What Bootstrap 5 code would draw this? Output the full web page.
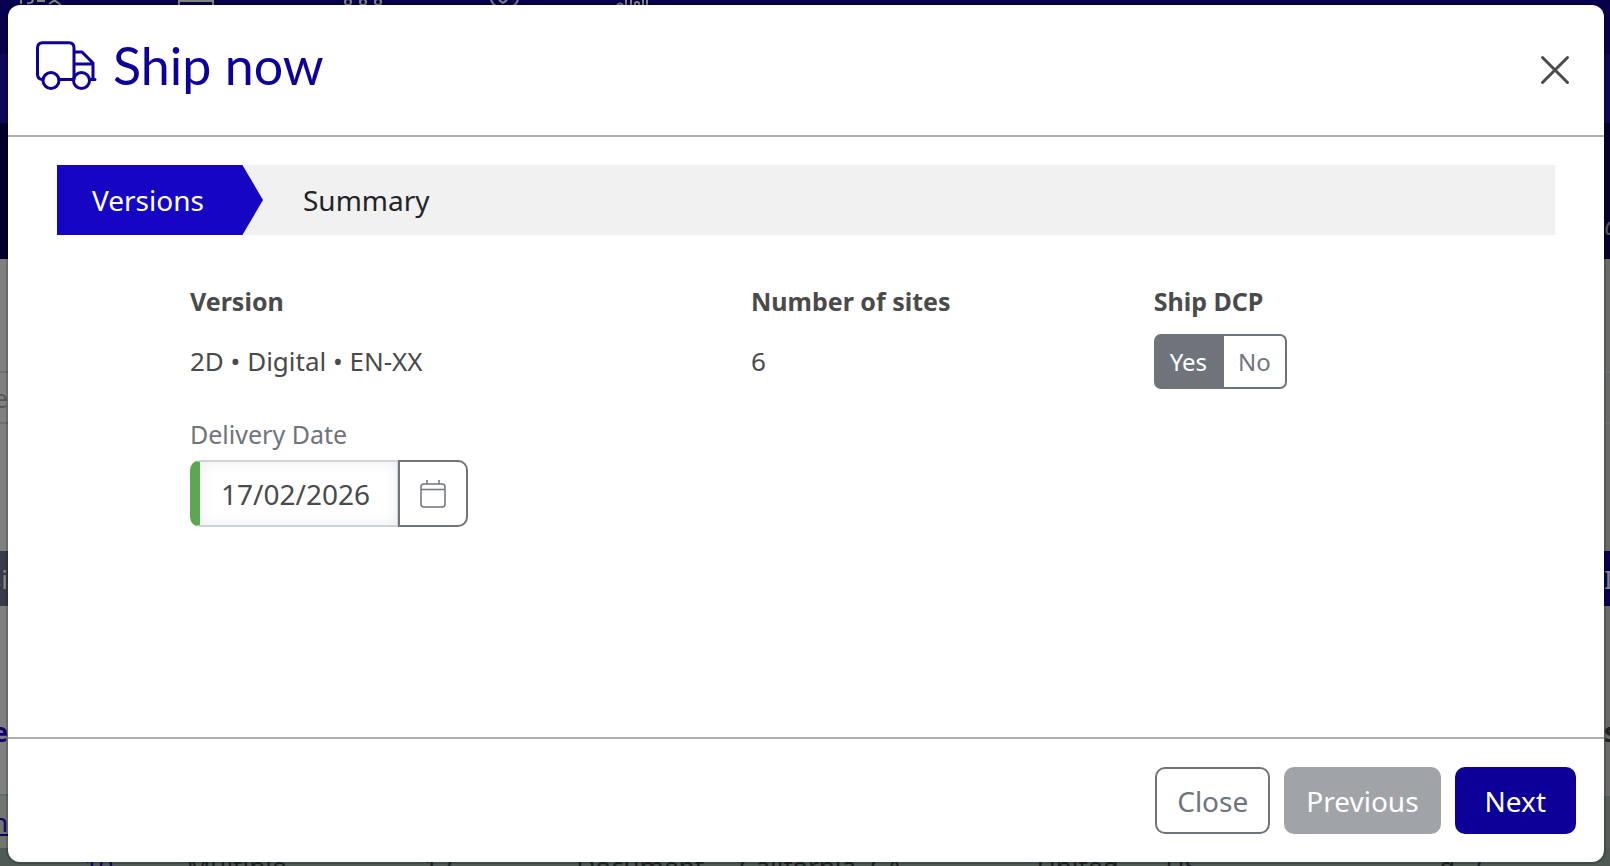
<!DOCTYPE html>
<html lang="en">
<head>
<meta charset="utf-8">
<meta name="viewport" content="width=device-width, initial-scale=1">
<title>Ship now</title>
<link href="https://cdn.jsdelivr.net/npm/bootstrap@5.3.0/dist/css/bootstrap.min.css" rel="stylesheet">
<style>
  :root { --navy: #0c0099; --slate: #6f747b; --ink: #4a4a4a; }
  body { font-family: "Noto Sans", "Open Sans", sans-serif; font-size: 26px; line-height: 36px; color: var(--ink); background: #808080; }

  /* dimmed page behind the dialog */
  .page-behind { position: absolute; inset: 0; overflow: hidden; z-index: 0; background: linear-gradient(90deg, #808080 50%, #666b68 50%); }
  .page-behind .line-box { display: flex; justify-content: space-between; align-items: center; white-space: nowrap; }
  .band-icons { height: 54px; background: #07004d; color: #85857c; }
  .band-icons svg { display: block; }
  .band-tabs { height: 69px; background: #0e085a; }
  .band-hero { height: 136px; background: #03002c; color: #55554f; }
  .band-blank { height: 112px; }
  .band-search { height: 53px; border: solid #6c7072; border-width: 2px 0; color: #55595a; }
  .band-gap { height: 127px; }
  .band-bar { height: 55px; background: linear-gradient(90deg, #393b48 50%, #07004d 50%); color: #858585; }
  .band-head { height: 190px; padding-top: 108px; border-bottom: 2px solid #6a6a72; font-weight: 700; color: #222; }
  .band-rows { background: linear-gradient(90deg, #6f7770 50%, #555f57 50%); color: #262a2c; }
  .band-rows a, .band-head span:first-child { color: #120070; }
  .row-cells { display: grid; grid-template-columns: 5.2% 6.4% 14.7% 9.5% 10.1% 18.5% 8% 17% 1fr; background: #505a55; color: #1d2123; white-space: nowrap; }
  .row-cells a { color: #120070; }
  .clip-left { direction: rtl; width: 8px; overflow: hidden; }
  .clip-right { width: 6px; overflow: hidden; }

  .dialog-frame { position: relative; z-index: 1; min-height: 100vh; padding: 5px 6px 4px 8px; }
  .dialog-frame .modal-content { flex: 1 1 auto; border: 0; border-radius: 12px; color: var(--ink); background: #fff; box-shadow: 0 0 0 2px #0000002e; }
  .modal-header { border-bottom: 2px solid #adadad; height: 132px; padding: 0 34px 0 27px; align-items: flex-start; }
  .modal-title { margin-top: 28px; font-family: Lato, sans-serif; font-size: 52px; font-weight: 400; line-height: 64px; color: var(--navy); }
  .x-button { margin-top: 50px; padding: 0; border: 0; background: none; line-height: 0; }
  .modal-body { padding: 28px 49px; }

  .steps { height: 70px; background: #f1f1f1; font-size: 28px; }
  .steps a { display: flex; align-items: center; color: #212529; text-decoration: none; }
  .steps .active { width: 206px; padding-left: 35px; color: #fff; background: #1406c3; clip-path: polygon(0 0, 90% 0, 100% 50%, 90% 100%, 0 100%); }
  .steps .next-step { padding-left: 40px; }

  .fields { display: grid; grid-template-columns: 41.1% 29.5% 1fr; margin: 48px 0 0 133px; }
  .fields h2 { margin: 0 0 15px; font-size: 25px; line-height: 36px; font-weight: 700; }
  .fields p { margin: 0; line-height: 54px; }
  .date-label { display: block; margin-top: 28px; font-size: 25px; line-height: 36px; color: var(--slate); }

  .toggle .btn { display: flex; align-items: center; height: 55px; padding: 0 14px; border: 2px solid var(--slate); border-radius: 7px; font-size: 24px; color: var(--slate); }
  .toggle .btn-check:checked + .btn { color: #fff; background: var(--slate); border-color: var(--slate); }

  .date-group { width: 278px; height: 67px; margin-top: 8px; }
  .date-group .form-control { border: 2px solid #ced2d9; border-left: 10px solid #5fa653; border-radius: 10px; padding: 0 0 0 21px; font-size: 28px; color: var(--ink); box-shadow: inset 0 0 14px #00000014; }
  .date-group .btn { width: 70px; padding: 0; border: 2px solid var(--slate); border-radius: 10px; color: var(--slate); line-height: 0; }

  .modal-footer { border-top: 2px solid #adadad; padding: 28px; gap: 14px; }
  .modal-footer > * { margin: 0; }
  .modal-footer .btn { height: 67px; padding: 0 20px; border: 2px solid; border-radius: 10px; font-size: 28px; }
  .btn-shut { color: var(--slate); border-color: var(--slate) !important; background: #fff; }
  .modal-footer .btn-prev { color: #fff; background: #a0a3a8; border-color: #a0a3a8; opacity: 1; }
  .modal-footer .btn-go { padding: 0 28px; color: #fff; background: var(--navy); border-color: var(--navy); }
</style>
</head>
<body>
<div class="page-behind" aria-hidden="true">
  <div class="band-icons">
    <svg width="700" height="6" fill="none" stroke="currentColor" stroke-width="2">
      <path d="M21 0v4M27 3q5 1 6-3M37 1h8M49 4l6-4M54 0l7 5M179 6V1h34v5M491 0q2 5 5 6M518 0q-2 5-5 6M499 0l4 3 4-3"/>
      <circle cx="348" cy="2" r="3"/><circle cx="363" cy="2" r="3"/><circle cx="378" cy="2" r="3"/>
      <path d="M617 5q3-3 6 0M626 0v6M631 0v6M635 6V3q2-2 4 0v3M643 0v6M647 0v6"/>
    </svg>
  </div>
  <div class="band-tabs"></div>
  <div class="band-hero d-flex align-items-end justify-content-end pb-3"><i class="clip-right">a</i></div>
  <div class="band-blank"></div>
  <div class="band-search line-box"><span class="clip-left">e</span></div>
  <div class="band-gap"></div>
  <div class="band-bar line-box"><span class="clip-left">si</span><span class="clip-right">I</span></div>
  <div class="band-head d-flex justify-content-between"><span class="clip-left">e</span><span class="clip-right">s</span></div>
  <div class="band-rows pt-2 pb-2"><a class="clip-left d-block" href="#" tabindex="-1">n</a></div>
  <div class="row-cells">
    <span></span><a href="#" tabindex="-1">10</a><span>Multiple</span><span>12</span><span>Document</span><span>California, CA</span><span>United</span><span>US</span><span>g...(</span>
  </div>
</div>

<main class="dialog-frame d-flex">
  <div class="modal-content" role="dialog" aria-labelledby="dialogTitle">
    <header class="modal-header">
      <div class="d-flex">
        <svg class="truck flex-shrink-0 mt-4 pt-2" width="62" height="66" viewBox="0 -4 62 58" fill="none" stroke="#0c0099" stroke-width="3" stroke-linecap="round" stroke-linejoin="round" aria-hidden="true">
          <path d="M7 38.500Q2.500 38 2.500 33V7Q2.500 1.700 7.500 1.700H34Q39 1.700 39 7V38M24 38.500H37M39 11h8l11 11V38.500M39 23H58M56 38.500h4"/>
          <circle cx="16" cy="39.500" r="8"/><circle cx="46.500" cy="39.500" r="8"/>
        </svg>
        <h1 class="modal-title ms-3" id="dialogTitle">Ship now</h1>
      </div>
      <button class="x-button" type="button" aria-label="Dismiss">
        <svg width="30" height="30" viewBox="0 0 30 30" fill="none" stroke="#4a4a4a" stroke-width="3" stroke-linecap="round"><path d="M2.500 2.500l25 25M27.500 2.500l-25 25"/></svg>
      </button>
    </header>

    <div class="modal-body">
      <nav class="steps d-flex" aria-label="Steps">
        <a class="active" href="#" aria-current="step">Versions</a>
        <a class="next-step" href="#">Summary</a>
      </nav>
      <div class="fields">
        <section>
          <h2>Version</h2>
          <p>2D • Digital • EN-XX</p>
          <label class="date-label" for="deliveryDate">Delivery Date</label>
          <div class="input-group date-group">
            <input class="form-control" id="deliveryDate" type="text" value="17/02/2026">
            <button class="btn" type="button" aria-label="Open calendar">
              <svg width="26" height="30" viewBox="0 0 26 30" fill="none" stroke="currentColor" stroke-width="1.500"><rect x="1" y="5" width="24" height="23" rx="3"/><path d="M1 10.500h24M7 1v4M19 1v4"/></svg>
            </button>
          </div>
        </section>
        <section>
          <h2>Number of sites</h2>
          <p>6</p>
        </section>
        <section>
          <h2>Ship DCP</h2>
          <div class="btn-group toggle" role="group" aria-label="Ship DCP">
            <input class="btn-check" type="radio" name="dcp" id="dcpYes" checked>
            <label class="btn" for="dcpYes">Yes</label>
            <input class="btn-check" type="radio" name="dcp" id="dcpNo">
            <label class="btn" for="dcpNo">No</label>
          </div>
        </section>
      </div>
    </div>

    <footer class="modal-footer">
      <button class="btn btn-shut" type="button">Close</button>
      <button class="btn btn-prev" type="button" disabled>Previous</button>
      <button class="btn btn-go" type="button">Next</button>
    </footer>
  </div>
</main>
<script src="https://cdn.jsdelivr.net/npm/bootstrap@5.3.0/dist/js/bootstrap.bundle.min.js"></script>
</body>
</html>
